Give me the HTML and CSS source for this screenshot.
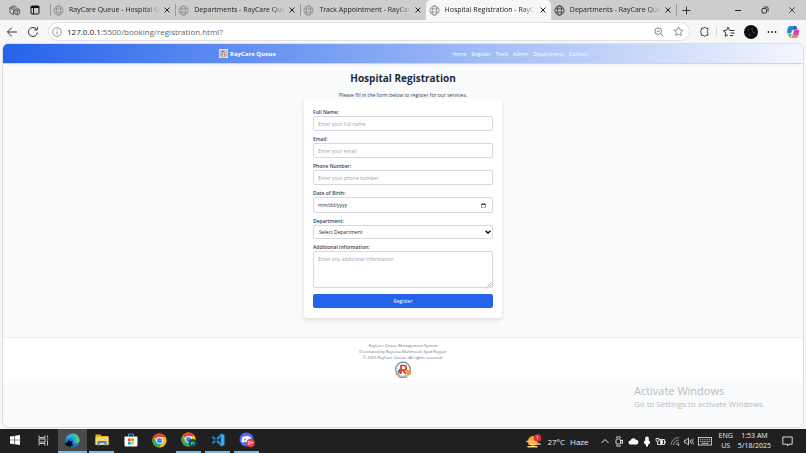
FILE: index.html
```html
<!DOCTYPE html>
<html lang="en">

<head>
    <meta charset="UTF-8">
    <title>Hospital Registration - RayCare Queue</title>
    <link rel="stylesheet" href="styles.css">
</head>

<body>
    <svg class="defs" width="0" height="0">
        <symbol id="globe" viewBox="0 0 12 12">
            <g fill="none" stroke="currentColor" stroke-width="0.9">
                <circle cx="6" cy="6" r="5" />
                <ellipse cx="6" cy="6" rx="2.3" ry="5" />
                <path d="M1.6 4.2h8.8M1.6 7.8h8.8" />
            </g>
        </symbol>
        <symbol id="close" viewBox="0 0 8 8">
            <path d="M1.5 1.5l5 5M6.5 1.5l-5 5" fill="none" stroke="currentColor" />
        </symbol>
        <symbol id="chrome" viewBox="0 0 16 16">
            <circle cx="8" cy="8" r="7.5" fill="#fbc116" />
            <path d="M8 8L1.5 4.2A7.5 7.5 0 0 1 14.5 4.2H8z" fill="#ea4335" />
            <path d="M1.5 4.2A7.5 7.5 0 0 0 7.6 15.5L11.2 9.8 8 8 4.7 9.6z" fill="#34a853" />
            <circle cx="8" cy="8" r="3.7" fill="#fff" />
            <circle cx="8" cy="8" r="2.8" fill="#4285f4" />
        </symbol>
    </svg>

    <!-- tabs -->
    <div class="tabbar">
        <div class="tab-tools">
            <button aria-label="Workspaces"><svg width="11" height="11" viewBox="0 0 12 12" fill="none" stroke="#333" stroke-width="0.8">
                    <path d="M6.5 5L9 3.8 11.3 5v4.5L9 10.8 6.5 9.5zM6.5 5L9 6.2 11.3 5M9 6.2v4.5M8.500 2.500L5 1 1 3v5.500L5 10.500M1 3l4 2M5 5v5.500M3 2l3.500 1.700" />
                </svg></button>
            <button aria-label="Tab actions"><svg width="10" height="10" viewBox="0 0 10 10" fill="none" stroke="#111">
                    <rect x="1" y="1" width="8" height="8" rx="1" />
                    <path d="M1 2h8" stroke-width="2" />
                    <path d="M3.5 3v6" />
                </svg></button>
        </div>
        <div class="tabs">
            <div class="tab">
                <svg class="globe"><use href="#globe" /></svg>
                <a href="#">RayCare Queue - Hospital Q</a>
                <button aria-label="Close tab"><svg><use href="#close" /></svg></button>
            </div>
            <div class="tab">
                <svg class="globe"><use href="#globe" /></svg>
                <a href="#">Departments - RayCare Que</a>
                <button aria-label="Close tab"><svg><use href="#close" /></svg></button>
            </div>
            <div class="tab">
                <svg class="globe"><use href="#globe" /></svg>
                <a href="#">Track Appointment - RayCar</a>
                <button aria-label="Close tab"><svg><use href="#close" /></svg></button>
            </div>
            <div class="tab active">
                <svg class="globe"><use href="#globe" /></svg>
                <a href="#">Hospital Registration - RayC</a>
                <button aria-label="Close tab"><svg><use href="#close" /></svg></button>
            </div>
            <div class="tab dark">
                <svg class="globe"><use href="#globe" /></svg>
                <a href="#">Departments - RayCare Que</a>
                <button aria-label="Close tab"><svg><use href="#close" /></svg></button>
            </div>
        </div>
        <button class="newtab" aria-label="New tab"><svg width="9" height="9" viewBox="0 0 9 9" stroke="#333">
                <path d="M4.5 0.5v8M0.5 4.5h8" />
            </svg></button>
        <div class="window-btns">
            <button aria-label="Minimize"><svg width="8" height="8" viewBox="0 0 8 8" stroke="#222">
                    <path d="M1 4.5h6" />
                </svg></button>
            <button aria-label="Restore"><svg width="8" height="8" viewBox="0 0 8 8" fill="none" stroke="#222" stroke-width="0.9">
                    <rect x="1" y="2.5" width="4.5" height="4.5" rx="0.8" />
                    <path d="M2.7 1h3.2a1.2 1.2 0 0 1 1.2 1.2v3.2" />
                </svg></button>
            <button aria-label="Close"><svg width="8" height="8" viewBox="0 0 8 8" stroke="#222" stroke-width="0.8">
                    <path d="M1.2 1.2l5.6 5.6M6.8 1.2L1.2 6.8" />
                </svg></button>
        </div>
    </div>

    <!-- address bar -->
    <div class="toolbar">
        <button aria-label="Back"><svg width="12" height="12" viewBox="0 0 12 12" fill="none" stroke="#333">
                <path d="M11 6H1.5M5.8 1.6L1.4 6l4.4 4.4" />
            </svg></button>
        <button aria-label="Refresh"><svg width="12" height="12" viewBox="0 0 12 12" fill="none" stroke="#333">
                <path d="M10.4 6.4A4.5 4.5 0 1 1 9.6 3.4M10.3 0.8v3.1H7.2" />
            </svg></button>
        <div class="address">
            <svg width="10" height="10" viewBox="0 0 10 10" fill="none" stroke="#777" stroke-width="0.8">
                <circle cx="5" cy="5" r="4.3" />
                <path d="M5 4.4v3M5 2.5v0.9" />
            </svg>
            <label for="url">127.0.0.1</label>
            <input id="url" type="text" value=":5500/booking/registration.html?">
            <button aria-label="Zoom out"><svg width="10" height="10" viewBox="0 0 10 10" fill="none" stroke="#777" stroke-width="0.9">
                    <circle cx="4.2" cy="4.2" r="3.3" />
                    <path d="M6.7 6.7L9.3 9.3M2.6 4.2h3.2" />
                </svg></button>
            <button aria-label="Add to favorites"><svg width="11" height="11" viewBox="0 0 12 12" fill="none" stroke="#777" stroke-width="0.9" stroke-linejoin="round">
                    <path d="M6 1l1.5 3.2 3.5.4-2.6 2.4.7 3.5L6 8.8l-3.1 1.7.7-3.5L1 4.6l3.5-.4z" />
                </svg></button>
        </div>
        <div class="toolbar-right">
            <button aria-label="Extensions"><svg width="11" height="11" viewBox="0 0 12 12" fill="none" stroke="#333" stroke-linejoin="round">
                    <path d="M2.5 2.5h2.3a1.4 1.4 0 0 1 2.7 0h2.3v2.3a1.5 1.5 0 0 0 0 2.7v2.6H7.5a1.4 1.4 0 0 1-2.7 0H2.5V7.6a1.5 1.5 0 0 1 0-2.8z" />
                </svg></button>
            <span class="divider"></span>
            <button aria-label="Favorites"><svg width="12" height="12" viewBox="0 0 12 12" fill="none" stroke="#333" stroke-linejoin="round">
                    <path d="M6.5 4.3L5 1.2 3.5 4.3 0.5 4.7 2.7 6.9 2.2 10.3 5 8.7M6.5 4.5h5M7.5 7h4M7 9.5h3" />
                </svg></button>
            <button aria-label="Profile"><svg width="14" height="14" viewBox="0 0 14 14">
                    <circle cx="7" cy="7" r="7" fill="#0c0d10" />
                    <path d="M4 5l1-1M7 3.5l2 .5M9 8l2-1M5 9l1 1.5M8 6h1" stroke="#777" stroke-width="0.7" />
                </svg></button>
            <button aria-label="Settings and more"><svg width="10" height="10" viewBox="0 0 10 10" fill="#222">
                    <circle cx="1.5" cy="5" r="0.9" />
                    <circle cx="5" cy="5" r="0.9" />
                    <circle cx="8.5" cy="5" r="0.9" />
                </svg></button>
            <button aria-label="Copilot"><svg width="14" height="14" viewBox="0 0 14 14">
                    <path d="M4 1h5l-2.5 7.5H2.5Q0.5 8.5 1 6L2 2.5Q2.5 1 4 1z" fill="#2189e0" />
                    <path d="M1.2 6Q0.5 9 3 9h3l-1.5 3.5Q3 12.5 2.5 10.5z" fill="#5fbf5a" />
                    <path d="M8 1h1.5q1 0 1.5 2l.3 1.5H7z" fill="#3a50c8" />
                    <path d="M8 4.5h3.5q2 0 1.5 3l-1 3.5q-.5 2-2.5 2h-5q1.5 0 2-2z" fill="#d946a0" />
                    <path d="M6.5 10h5.8l-.3 1q-.5 2-2.5 2h-5q1.5 0 2-3z" fill="#f58a4b" />
                    <path d="M6.3 5h1.8L6.8 9H5z" fill="#fff" />
                </svg></button>
        </div>
    </div>

    <!-- page -->
    <div class="page">
        <header>
            <div class="nav-inner">
                <a class="brand" href="#">
                    <svg width="9" height="9" viewBox="0 0 9 9">
                        <rect width="9" height="9" fill="#e3dfe4" />
                        <circle cx="4.5" cy="4.5" r="3.5" fill="none" stroke="#8fa6b8" stroke-width="0.8" />
                        <path d="M3 7V2.5h2q2 1 0 2.200L6.5 7" fill="none" stroke="#c4523c" />
                        <path d="M1 7.500l2-1.500M6 6.200h2.500" stroke="#e89742" />
                    </svg>
                    RayCare Queue
                </a>
                <nav>
                    <a href="#">Home</a>
                    <a href="#">Register</a>
                    <a href="#">Track</a>
                    <a href="#">Admin</a>
                    <a href="#">Departments</a>
                    <a href="#">Contact</a>
                </nav>
            </div>
        </header>
        <main>
            <h1>Hospital Registration</h1>
            <p>Please fill in the form below to register for our services.</p>
            <form class="card">
                <div class="field">
                    <label for="name">Full Name:</label>
                    <input id="name" type="text" placeholder="Enter your full name">
                </div>
                <div class="field">
                    <label for="email">Email:</label>
                    <input id="email" type="email" placeholder="Enter your email">
                </div>
                <div class="field">
                    <label for="phone">Phone Number:</label>
                    <input id="phone" type="tel" placeholder="Enter your phone number">
                </div>
                <div class="field">
                    <label for="dob">Date of Birth:</label>
                    <input id="dob" type="date">
                </div>
                <div class="field">
                    <label for="department">Department:</label>
                    <div class="select-wrap">
                        <select id="department">
                            <option>Select Department</option>
                        </select>
                        <svg class="arrow" width="6" height="4" viewBox="0 0 6 4" fill="none" stroke="#111" stroke-width="1.5">
                            <path d="M0.5 0.7L3 3.1 5.5 0.7" />
                        </svg>
                    </div>
                </div>
                <div class="field">
                    <label for="info">Additional Information:</label>
                    <div class="area-wrap">
                        <textarea id="info" placeholder="Enter any additional information"></textarea>
                        <svg class="grip" width="5" height="5" viewBox="0 0 5 5" stroke="#777" stroke-width="0.6">
                            <path d="M0.5 4.5l4-4M2.8 4.7l2-2" />
                        </svg>
                    </div>
                </div>
                <button type="button" class="submit">Register</button>
            </form>
        </main>
        <footer>
            <p>RayCare Queue Management System</p>
            <p>Developed by Rayeesa Mahmood, Syed Rayyan</p>
            <p>© 2025 RayCare Queue. All rights reserved.</p>
            <svg width="18" height="18" viewBox="0 0 18 18">
                <circle cx="9" cy="8.5" r="7.3" fill="#fff" stroke="#5b8aa3" stroke-width="1.2" />
                <path d="M2 13q7 4 14-1v2q-6 4-13 1z" fill="#b3c0c8" />
                <path d="M11.5 9H17v4.5h-4z" fill="#ef9440" />
                <path d="M1.5 13l4-2v3H2z" fill="#ef9440" />
                <path d="M3.5 10l3-3v5h-2z" fill="#3f8193" />
                <path d="M7 13V4.5h3a2.3 2.3 0 0 1 0 4.6H8.8L12 13" fill="none" stroke="#d23b2c" stroke-width="1.7" />
                <path d="M4.5 16q4.5 1.5 9 0" stroke="#c9574a" stroke-width="0.8" fill="none" />
            </svg>
        </footer>
        <div class="watermark">
            <div class="big">Activate Windows</div>
            <div>Go to Settings to activate Windows.</div>
        </div>
    </div>

    <!-- taskbar -->
    <div class="taskbar">
        <div class="apps">
            <button aria-label="Start"><svg width="10" height="10" viewBox="0 0 10 10" fill="#fff">
                    <path d="M0 1.5L4.5 0.9V4.7H0zM5.1 0.8L10 0v4.7H5.1zM0 5.3h4.5v3.9L0 8.5zM5.1 5.3H10V10L5.1 9.2z" />
                </svg></button>
            <button aria-label="Task view"><svg width="11" height="11" viewBox="0 0 11 11" fill="none" stroke="#ddd" stroke-width="0.9">
                    <path d="M1 0.5v2h6v-2M1 10.5v-2h6v2M9.5 0.5v2M9.5 5.5v5" />
                    <rect x="1" y="4" width="6" height="3" />
                    <path d="M8.7 4h1.6" />
                </svg></button>
            <button class="open current" aria-label="Microsoft Edge"><svg width="15" height="15" viewBox="0 0 15 15">
                    <circle cx="7.5" cy="7.5" r="7" fill="#1683d0" />
                    <path d="M0.6 6.5A7 7 0 0 1 14.5 7q0 3-3.5 3Q8.5 10 9 8.5 9.5 5.5 6 5 2.5 4.5 0.6 6.5z" fill="#37a9d8" />
                    <path d="M7 0.5Q14 1 14.5 7.2q0 2.6-3.5 2.8 2-5-4-9.5z" fill="#4fcf7a" />
                    <path d="M5 7q-1 5 5 6.5-6 2-9-3.5Q1.5 7 5 7z" fill="#105a9f" />
                    <path d="M0 10l2.500-.5 1-2.500L5 8.500l2.500-.5L7 10.500 8.500 12 6 12.500 5 14.500 3.500 13H1z" fill="#0b0d10" />
                </svg></button>
            <button class="open" aria-label="File Explorer"><svg width="14" height="12" viewBox="0 0 14 12">
                    <path d="M0.5 0.5h5l1 1.5h7v9h-13z" fill="#e8ac2b" />
                    <path d="M0.5 3h13v8h-13z" fill="#fbd868" />
                    <path d="M2.5 7h9v4.5H9.5V9h-5v2.5h-2z" fill="#3c8cd6" />
                </svg></button>
            <button aria-label="Microsoft Store"><svg width="14" height="14" viewBox="0 0 14 14">
                    <path d="M4.5 3.5V1.2h5v2.3" fill="none" stroke="#38a8e0" />
                    <path d="M0.5 3.5h13v8.5q0 1.5-1.5 1.5H2q-1.5 0-1.5-1.5z" fill="#fff" />
                    <path d="M4 5.5h2.7v2.7H4z" fill="#f25022" />
                    <path d="M7.3 5.5H10v2.7H7.3z" fill="#7fba00" />
                    <path d="M4 8.8h2.7v2.7H4z" fill="#00a4ef" />
                    <path d="M7.3 8.8H10v2.7H7.3z" fill="#ffb900" />
                </svg></button>
            <button aria-label="Google Chrome"><svg width="15" height="15"><use href="#chrome" /></svg></button>
            <button class="open" aria-label="Google Chrome, profile n"><svg width="16" height="16" viewBox="0 0 16 16">
                    <use href="#chrome" width="15" height="15" />
                    <circle cx="11.5" cy="11" r="4" fill="#07504a" />
                    <text x="11.5" y="13" font-size="6" text-anchor="middle" fill="#dff">n</text>
                </svg></button>
            <button class="open" aria-label="Visual Studio Code"><svg width="14" height="14" viewBox="0 0 14 14">
                    <path d="M10 0.5L13.5 2v10L10 13.5z" fill="#38a9ef" />
                    <path d="M10.2 0.5V4.5L2 11 0.5 9.8zM10.2 13.5V9.5L2 3 0.5 4.2z" fill="#1585cf" />
                </svg></button>
            <button class="open" aria-label="Discord"><svg width="16" height="16" viewBox="0 0 16 16">
                    <circle cx="7.5" cy="7.5" r="7" fill="#5865f2" />
                    <path d="M3.5 5q4-2 8 0l1.2 4.5q-1 1-2.5 1.3L9.5 10h-4l-.7.8q-1.3-.3-2.5-1.3z" fill="#fff" />
                    <circle cx="6" cy="7.7" r="0.9" fill="#5865f2" />
                    <circle cx="11.5" cy="11" r="4.3" fill="#e0434b" />
                    <text x="11.5" y="13" font-size="5" text-anchor="middle" fill="#fff">9+</text>
                </svg></button>
        </div>
        <div class="tray">
            <button class="weather"><svg width="16" height="15" viewBox="0 0 16 15">
                    <circle cx="7" cy="7" r="5" fill="#f5a623" />
                    <path d="M1 7.5h9M3 10h11M2 12.7h9" stroke="#f7cf8a" stroke-width="1.6" stroke-linecap="round" />
                    <circle cx="11.5" cy="4" r="3.8" fill="#d92f2f" />
                    <text x="11.5" y="6" font-size="5" text-anchor="middle" fill="#fff">1</text>
                </svg><span>27°C</span><span>Haze</span></button>
            <button aria-label="Hidden icons"><svg width="10" height="8" viewBox="0 0 10 8" fill="none" stroke="#eee">
                    <path d="M1.5 6L5 2.5 8.5 6" />
                </svg></button>
            <button aria-label="Meet now"><svg width="10" height="11" viewBox="0 0 10 11" fill="none" stroke="#eee" stroke-width="0.9">
                    <rect x="2" y="3" width="4.5" height="5" rx="1" />
                    <path d="M6.5 5l2-1v3.5l-2-1M2 1.3q2.5-1 5 0M2 9.7q2.5 1 5 0" />
                </svg></button>
            <button aria-label="OneDrive"><svg width="11" height="8" viewBox="0 0 11 8" fill="#fff">
                    <path d="M2.5 7.5a2 2 0 0 1 0-4A3 3 0 0 1 8 2.8a2.4 2.4 0 0 1 .7 4.7z" />
                </svg></button>
            <button aria-label="Microphone"><svg width="8" height="11" viewBox="0 0 8 11" fill="#fff">
                    <rect x="2.2" y="0.5" width="3.6" height="6" rx="1.6" />
                    <path d="M1 5h6v1.5a2 2 0 0 1-2 2v2H3v-2a2 2 0 0 1-2-2z" />
                </svg></button>
            <button aria-label="Battery"><svg width="11" height="9" viewBox="0 0 11 9" fill="none" stroke="#eee" stroke-width="0.9">
                    <path d="M4 2.5h5.5v5H4M10.3 4v2M1 1.5v1.5q0 1.5 1.5 1.5T4 3V1.5H1M2.5 4.5v3H4" />
                    <path d="M5.5 3.5h2v3h-2z" fill="#eee" />
                </svg></button>
            <button aria-label="Network"><svg width="10" height="10" viewBox="0 0 10 10" fill="none" stroke="#999" stroke-width="0.9">
                    <path d="M1 9A8 8 0 0 1 9 1.5M3.5 9A5.5 5.5 0 0 1 9 4M6 9a3 3 0 0 1 3-2.5" />
                    <circle cx="8.5" cy="8.7" r="0.7" fill="#fff" />
                </svg></button>
            <button aria-label="Volume"><svg width="10" height="9" viewBox="0 0 10 9" fill="none" stroke="#eee" stroke-width="0.8">
                    <path d="M0.5 3.2H2L4.5 1v7L2 5.8H0.5zM6 3q1 1.5 0 3M7.5 2q1.8 2.5 0 5" />
                    <path d="M9 1q2 3.5 0 7" stroke="#777" />
                </svg></button>
            <button aria-label="Keyboard"><svg width="14" height="9" viewBox="0 0 14 9" fill="none" stroke="#eee" stroke-width="0.8">
                    <rect x="0.5" y="0.5" width="13" height="7.5" />
                    <path d="M2 2.7h10M2 4.5h10" stroke-dasharray="1 0.8" />
                    <path d="M3.5 6.3h7" />
                </svg></button>
            <div class="stack lang"><span>ENG</span><span>US</span></div>
            <div class="stack clock"><span>1:53 AM</span><span>5/18/2025</span></div>
            <button aria-label="Notifications"><svg width="11" height="11" viewBox="0 0 11 11" fill="none" stroke="#eee" stroke-width="0.9">
                    <path d="M0.8 1h9.4v7.2H7L5.5 10V8.2H0.8z" />
                </svg></button>
        </div>
    </div>
</body>

</html>
```

FILE: styles.css
```css
* {
    box-sizing: border-box;
}

body {
    margin: 0;
    height: 100vh;
    display: flex;
    flex-direction: column;
    font-family: "Open Sans", "Noto Sans", sans-serif;
    background: #f7f7f7;
    overflow: hidden;
}

button,
input,
select,
textarea {
    font-family: inherit;
    margin: 0;
}

button {
    display: flex;
    align-items: center;
    justify-content: center;
    padding: 0;
    border: none;
    background: none;
}

a {
    color: inherit;
    text-decoration: none;
}

svg {
    flex: none;
    display: block;
}

.defs {
    position: absolute;
}

/* tabs */
.tabbar {
    flex: none;
    display: flex;
    align-items: center;
    height: 20px;
    background: #cdcdcd;
}

.tab-tools {
    flex: none;
    display: flex;
    gap: 10px;
    width: 50px;
    padding-left: 9px;
}

.tabs {
    flex: 0 1 626px;
    min-width: 0;
    display: flex;
    align-self: stretch;
}

.tab {
    flex: 1 1 0;
    min-width: 0;
    display: flex;
    align-items: center;
    gap: 3px;
    padding: 0 4px 0 3px;
    color: #8a8a8a;
    background: linear-gradient(#999, #999) left center / 1px 12px no-repeat;
}

.tab a {
    flex: 1;
    min-width: 0;
    padding-left: 2px;
    overflow: hidden;
    white-space: nowrap;
    font-size: 7px;
    line-height: 12px;
    color: #222;
    -webkit-mask-image: linear-gradient(to right, #000 85%, transparent);
    mask-image: linear-gradient(to right, #000 85%, transparent);
}

.tab button {
    color: #222;
}

.tab button svg {
    width: 8px;
    height: 8px;
}

.tab .globe {
    width: 11px;
    height: 11px;
}

.tab.active {
    background: #f7f7f7;
    border-radius: 5px 5px 0 0;
}

.tab.dark {
    background: none;
    color: #333;
}

.newtab {
    flex: none;
    width: 20px;
    height: 12px;
    border-left: 1px solid #999;
}

.window-btns {
    flex: none;
    display: flex;
    gap: 19px;
    margin-left: auto;
    padding-right: 10px;
}

/* address bar */
.toolbar {
    flex: none;
    display: flex;
    align-items: center;
    gap: 9px;
    height: 23px;
    padding: 0 6px;
}

.address {
    flex: 1;
    display: flex;
    align-items: center;
    height: 19px;
    padding: 0 5px 0 3px;
    border: 1px solid #e2e2e2;
    border-radius: 10px;
    background: #fff;
    font-size: 8px;
}

.address label {
    padding-left: 5px;
    color: #222;
}

.address input {
    flex: 1;
    min-width: 0;
    padding: 0;
    border: none;
    font-size: 8px;
    color: #666;
    background: none;
    outline: none;
}

.address button {
    margin-left: 9px;
}

.toolbar-right {
    display: flex;
    align-items: center;
    gap: 9px;
}

.divider {
    width: 1px;
    height: 9px;
    margin: 0 -3px;
    background: #d5d5d5;
}

/* page */
.page {
    position: relative;
    flex: 1;
    min-height: 0;
    margin: 0 2px 1px;
    border: 1px solid #ddd;
    border-radius: 6px;
    overflow: hidden;
    background: #f8fafc;
    color: #1e293b;
}

header {
    padding: 0 27%;
    background: linear-gradient(to right, #2563eb, #f3f6fd);
    box-shadow: 0 1px 1px rgba(0, 0, 0, 0.15);
    color: #fff;
}

.nav-inner {
    display: flex;
    align-items: center;
    justify-content: space-between;
    height: 19px;
}

.brand {
    display: flex;
    align-items: center;
    gap: 2px;
    font-size: 6px;
    font-weight: 700;
    white-space: nowrap;
}

nav {
    display: flex;
    gap: 5px;
    font-size: 5px;
}

main {
    width: 24%;
    min-width: 198px;
    margin: 0 auto;
    padding: 8px 0 19px;
}

h1 {
    margin: 0;
    font-size: 10px;
    line-height: 15px;
    font-weight: 700;
    text-align: center;
    white-space: nowrap;
}

main p {
    margin: 6px 0 1px;
    font-size: 5px;
    line-height: 6px;
    text-align: center;
    color: #374151;
}

.card {
    display: flex;
    flex-direction: column;
    gap: 5px;
    padding: 10px 9px;
    border-radius: 3px;
    background: #fff;
    box-shadow: 0 2px 4px rgba(0, 0, 0, 0.12);
}

.field label {
    display: block;
    font-size: 5px;
    line-height: 7px;
    font-weight: 600;
    color: #374151;
}

.field input,
.field select,
.field textarea {
    display: block;
    width: 100%;
    height: 15px;
    padding: 0 4px;
    border: 1px solid #d5d9df;
    border-radius: 2px;
    background: #fff;
    color: #1f2937;
    font-size: 5px;
}

.field input[type="date"] {
    height: 16px;
}

.field ::-webkit-datetime-edit-text,
.field ::-webkit-datetime-edit-month-field,
.field ::-webkit-datetime-edit-day-field,
.field ::-webkit-datetime-edit-year-field {
    padding: 0;
}

.field ::placeholder {
    color: #9ca3af;
}

.field select {
    appearance: none;
    height: 14px;
    padding: 0 5px;
}

.select-wrap,
.area-wrap {
    position: relative;
}

.arrow {
    position: absolute;
    right: 2px;
    top: 5px;
}

.field textarea {
    height: 37px;
    padding: 4px;
    line-height: 7px;
    resize: none;
}

.grip {
    position: absolute;
    right: 1px;
    bottom: 1px;
}

.submit {
    height: 14px;
    margin-top: 1px;
    border-radius: 2px;
    background: #2563eb;
    color: #fff;
    font-size: 5px;
    font-weight: 500;
}

footer {
    display: flex;
    flex-direction: column;
    align-items: center;
    padding: 5px 0 4px;
    border-top: 1px solid #eceef1;
    background: #fff;
    color: #6b7280;
    font-size: 4px;
    line-height: 6px;
}

footer p {
    margin: 0;
}

.watermark {
    position: absolute;
    right: 38px;
    bottom: 17px;
    font-size: 8px;
    line-height: 12px;
    color: #b9bbbd;
}

.watermark .big {
    font-size: 11px;
    line-height: 14px;
}

/* taskbar */
.taskbar {
    flex: none;
    display: flex;
    justify-content: space-between;
    height: 24px;
    background: #202020;
    color: #eee;
}

.apps {
    display: flex;
}

.apps button {
    width: 29px;
    border-bottom: 2px solid transparent;
}

.apps .open {
    width: 25px;
    margin: 0 2px;
    border-bottom-color: #76b9ed;
}

.apps .current {
    width: 29px;
    margin: 0;
    background: #4a4a4a;
}

.tray {
    display: flex;
    align-items: center;
    gap: 4px;
    padding-right: 13px;
}

.weather {
    gap: 5px;
    margin-right: 7px;
    color: #eee;
    font-size: 8px;
}

.stack {
    display: flex;
    flex-direction: column;
    align-items: center;
    font-size: 7px;
    line-height: 10px;
}

.lang {
    margin: 0 1px 0 3px;
}

.clock {
    margin-right: 7px;
}
```
